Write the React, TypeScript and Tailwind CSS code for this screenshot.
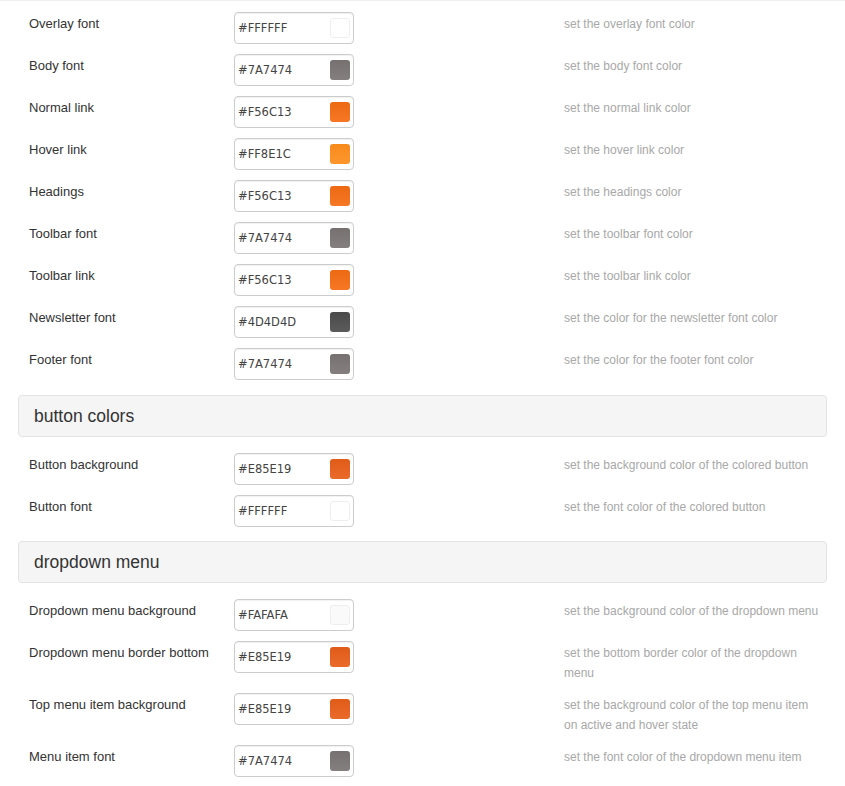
import React from "react";

type Row = { label: string; value: string; desc: string };

const section1: Row[] = [
  { label: "Overlay font", value: "#FFFFFF", desc: "set the overlay font color" },
  { label: "Body font", value: "#7A7474", desc: "set the body font color" },
  { label: "Normal link", value: "#F56C13", desc: "set the normal link color" },
  { label: "Hover link", value: "#FF8E1C", desc: "set the hover link color" },
  { label: "Headings", value: "#F56C13", desc: "set the headings color" },
  { label: "Toolbar font", value: "#7A7474", desc: "set the toolbar font color" },
  { label: "Toolbar link", value: "#F56C13", desc: "set the toolbar link color" },
  { label: "Newsletter font", value: "#4D4D4D", desc: "set the color for the newsletter font color" },
  { label: "Footer font", value: "#7A7474", desc: "set the color for the footer font color" },
];

const section2: Row[] = [
  { label: "Button background", value: "#E85E19", desc: "set the background color of the colored button" },
  { label: "Button font", value: "#FFFFFF", desc: "set the font color of the colored button" },
];

const section3: Row[] = [
  { label: "Dropdown menu background", value: "#FAFAFA", desc: "set the background color of the dropdown menu" },
  { label: "Dropdown menu border bottom", value: "#E85E19", desc: "set the bottom border color of the dropdown menu" },
  { label: "Top menu item background", value: "#E85E19", desc: "set the background color of the top menu item on active and hover state" },
  { label: "Menu item font", value: "#7A7474", desc: "set the font color of the dropdown menu item" },
];

function ColorRow({ row }: { row: Row }) {
  const isLight = row.value === "#FFFFFF" || row.value === "#FAFAFA";
  return (
    <div className="flex items-start mb-[10px]">
      <div className="w-[216px] shrink-0 pl-[11px] pt-[2px] text-[13px] leading-[20px] text-[#333]">{row.label}</div>
      <div className="w-[120px] h-[32px] border border-[#cccccc] rounded-[4px] shadow-[inset_0_1px_1px_rgba(0,0,0,0.06)] bg-white flex items-center justify-between pl-[3px] pr-[3px] shrink-0">
        <span className="text-[11.5px] text-[#444] font-['DejaVu_Sans',sans-serif] pt-[1px]">{row.value}</span>
        <span
          className={`w-[20px] h-[20px] rounded-[3px] ${isLight ? "border border-[#eeeeee]" : ""}`}
          style={{
            backgroundColor: row.value,
            backgroundImage: isLight
              ? "none"
              : "linear-gradient(to bottom, rgba(0,0,0,0.03), rgba(255,255,255,0.08))",
          }}
        />
      </div>
      <div className="ml-[210px] w-[259px] shrink-0 pt-[2px] text-[12px] leading-[20px] text-[#a8a8a8]">{row.desc}</div>
    </div>
  );
}

function Header({ title, className }: { title: string; className: string }) {
  return (
    <div className={`h-[42px] border border-[#e3e3e3] rounded-[4px] bg-[#f5f5f5] flex items-center pl-[15px] ${className}`}>
      <span className="text-[17.5px] text-[#333]">{title}</span>
    </div>
  );
}

export default function App() {
  return (
    <div className="w-[845px] h-[786px] bg-white border-t border-[#f0f0f0] font-['Liberation_Sans',Arial,sans-serif] overflow-hidden">
      <div className="pl-[18px] pr-[18px] pt-[11px]">
        {section1.map((r, i) => (
          <ColorRow key={"a" + i} row={r} />
        ))}
        <Header title="button colors" className="mt-[15px] mb-[16px]" />
        {section2.map((r, i) => (
          <ColorRow key={"b" + i} row={r} />
        ))}
        <Header title="dropdown menu" className="mt-[14px] mb-[16px]" />
        {section3.map((r, i) => (
          <ColorRow key={"c" + i} row={r} />
        ))}
      </div>
    </div>
  );
}
